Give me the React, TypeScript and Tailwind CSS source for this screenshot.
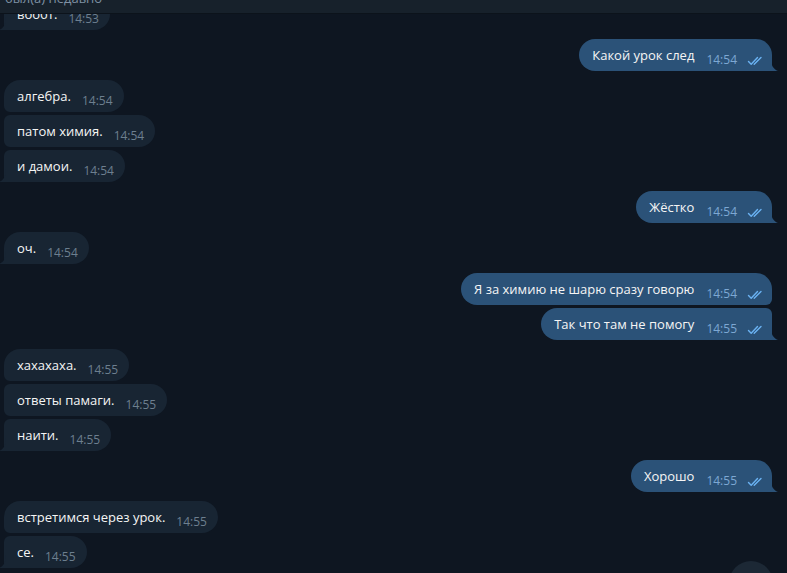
import React from 'react';

type Msg = { text: string; time: string; out: boolean; pos: 'first' | 'mid' | 'last' | 'single' };

const MESSAGES: Msg[] = [
    { text: 'вообт.', time: '14:53', out: false, pos: 'last' },
    { text: 'Какой урок след', time: '14:54', out: true, pos: 'single' },
    { text: 'алгебра.', time: '14:54', out: false, pos: 'first' },
    { text: 'патом химия.', time: '14:54', out: false, pos: 'mid' },
    { text: 'и дамои.', time: '14:54', out: false, pos: 'last' },
    { text: 'Жёстко', time: '14:54', out: true, pos: 'single' },
    { text: 'оч.', time: '14:54', out: false, pos: 'single' },
    { text: 'Я за химию не шарю сразу говорю', time: '14:54', out: true, pos: 'first' },
    { text: 'Так что там не помогу', time: '14:55', out: true, pos: 'last' },
    { text: 'хахахаха.', time: '14:55', out: false, pos: 'first' },
    { text: 'ответы памаги.', time: '14:55', out: false, pos: 'mid' },
    { text: 'наити.', time: '14:55', out: false, pos: 'last' },
    { text: 'Хорошо', time: '14:55', out: true, pos: 'single' },
    { text: 'встретимся через урок.', time: '14:55', out: false, pos: 'first' },
    { text: 'се.', time: '14:55', out: false, pos: 'last' },
];

const DoubleCheck = () => (
    <svg width="16" height="10" viewBox="0 0 16 10" fill="none" stroke="#6ab2f2" strokeWidth="1.4" strokeLinecap="round" strokeLinejoin="round">
        <path d="M1.5 5.5 L4.2 8.3 L10.5 1.5" />
        <path d="M7.2 8.3 L14 1.5" />
    </svg>
);

const Tail = ({ out, color }: { out: boolean; color: string }) => (
    <svg
        width="7"
        height="13"
        viewBox="0 0 7 13"
        className={out ? 'absolute bottom-0 right-[-6px]' : 'absolute bottom-0 left-[-5px]'}
    >
        {out ? <path d="M0 0 C0 7 2 11 7 13 L0 13 Z" fill={color} /> : <path d="M7 0 C7 7 5 11 0 13 L7 13 Z" fill={color} />}
    </svg>
);

const radiusClass = (m: Msg) => {
    if (m.out) {
        if (m.pos === 'first') return 'rounded-[16px] rounded-br-[6px]';
        if (m.pos === 'mid') return 'rounded-l-[16px] rounded-r-[6px]';
        if (m.pos === 'last') return 'rounded-l-[16px] rounded-tr-[6px] rounded-br-none';
        return 'rounded-l-[16px] rounded-tr-[16px] rounded-br-none';
    }
    if (m.pos === 'first') return 'rounded-[16px] rounded-bl-[6px]';
    if (m.pos === 'mid') return 'rounded-r-[16px] rounded-l-[6px]';
    if (m.pos === 'last') return 'rounded-r-[16px] rounded-tl-[6px] rounded-bl-none';
    return 'rounded-r-[16px] rounded-tl-[16px] rounded-bl-none';
};

const Bubble = ({ m, index }: { m: Msg; index: number }) => {
    const prev = MESSAGES[index - 1];
    const gap = index === 0 ? '' : prev && prev.out === m.out ? 'mt-[3px]' : 'mt-[9px]';
    const hasTail = m.pos === 'last' || m.pos === 'single';
    const bg = m.out ? '#2b5278' : '#182533';

    return (
        <div className={`flex ${m.out ? 'justify-end' : 'justify-start'} ${gap}`}>
            <div
                className={`relative flex items-start h-[32px] ${m.out ? 'pl-[13px] pr-[9px] bg-[#2b5278]' : 'pl-[13px] pr-[11px] bg-[#182533]'} ${radiusClass(m)}`}
            >
                <span className="mt-[6px] text-[13px] leading-[20px] text-[#f5f5f5] whitespace-nowrap">{m.text}</span>
                <span className={`mt-[14px] text-[12px] leading-[14px] ${m.out ? 'ml-[12px] text-[#7da8d3]' : 'ml-[11px] text-[#6d7f8f]'}`}>
                    {m.time}
                </span>
                {m.out && (
                    <span className="ml-[10px] mt-[17px] flex">
                        <DoubleCheck />
                    </span>
                )}
                {hasTail && <Tail out={m.out} color={bg} />}
            </div>
        </div>
    );
};

export default function App() {
    return (
        <div className="relative w-[787px] h-[573px] overflow-hidden bg-[#0e1621] flex flex-col" style={{ fontFamily: '"Open Sans", "Noto Sans", sans-serif' }}>
            {/* Header (cut off) */}
            <div className="relative z-10 h-[14px] shrink-0 overflow-hidden bg-[#17212b] border-b border-[#0c131b]">
                <div className="-mt-[9px] pl-[5px] text-[13px] leading-[14px] text-[#7f91a4]">был(а) недавно</div>
            </div>

            {/* Messages */}
            <div className="relative z-0 -mt-[16px] flex flex-col pl-[4px] pr-[15px]">
                {MESSAGES.map((m, i) => (
                    <Bubble key={i} m={m} index={i} />
                ))}
            </div>

            {/* Scroll down button */}
            <div className="absolute right-[14px] bottom-[-32px] w-[44px] h-[44px] rounded-full bg-[#1c2835]" />
        </div>
    );
}
